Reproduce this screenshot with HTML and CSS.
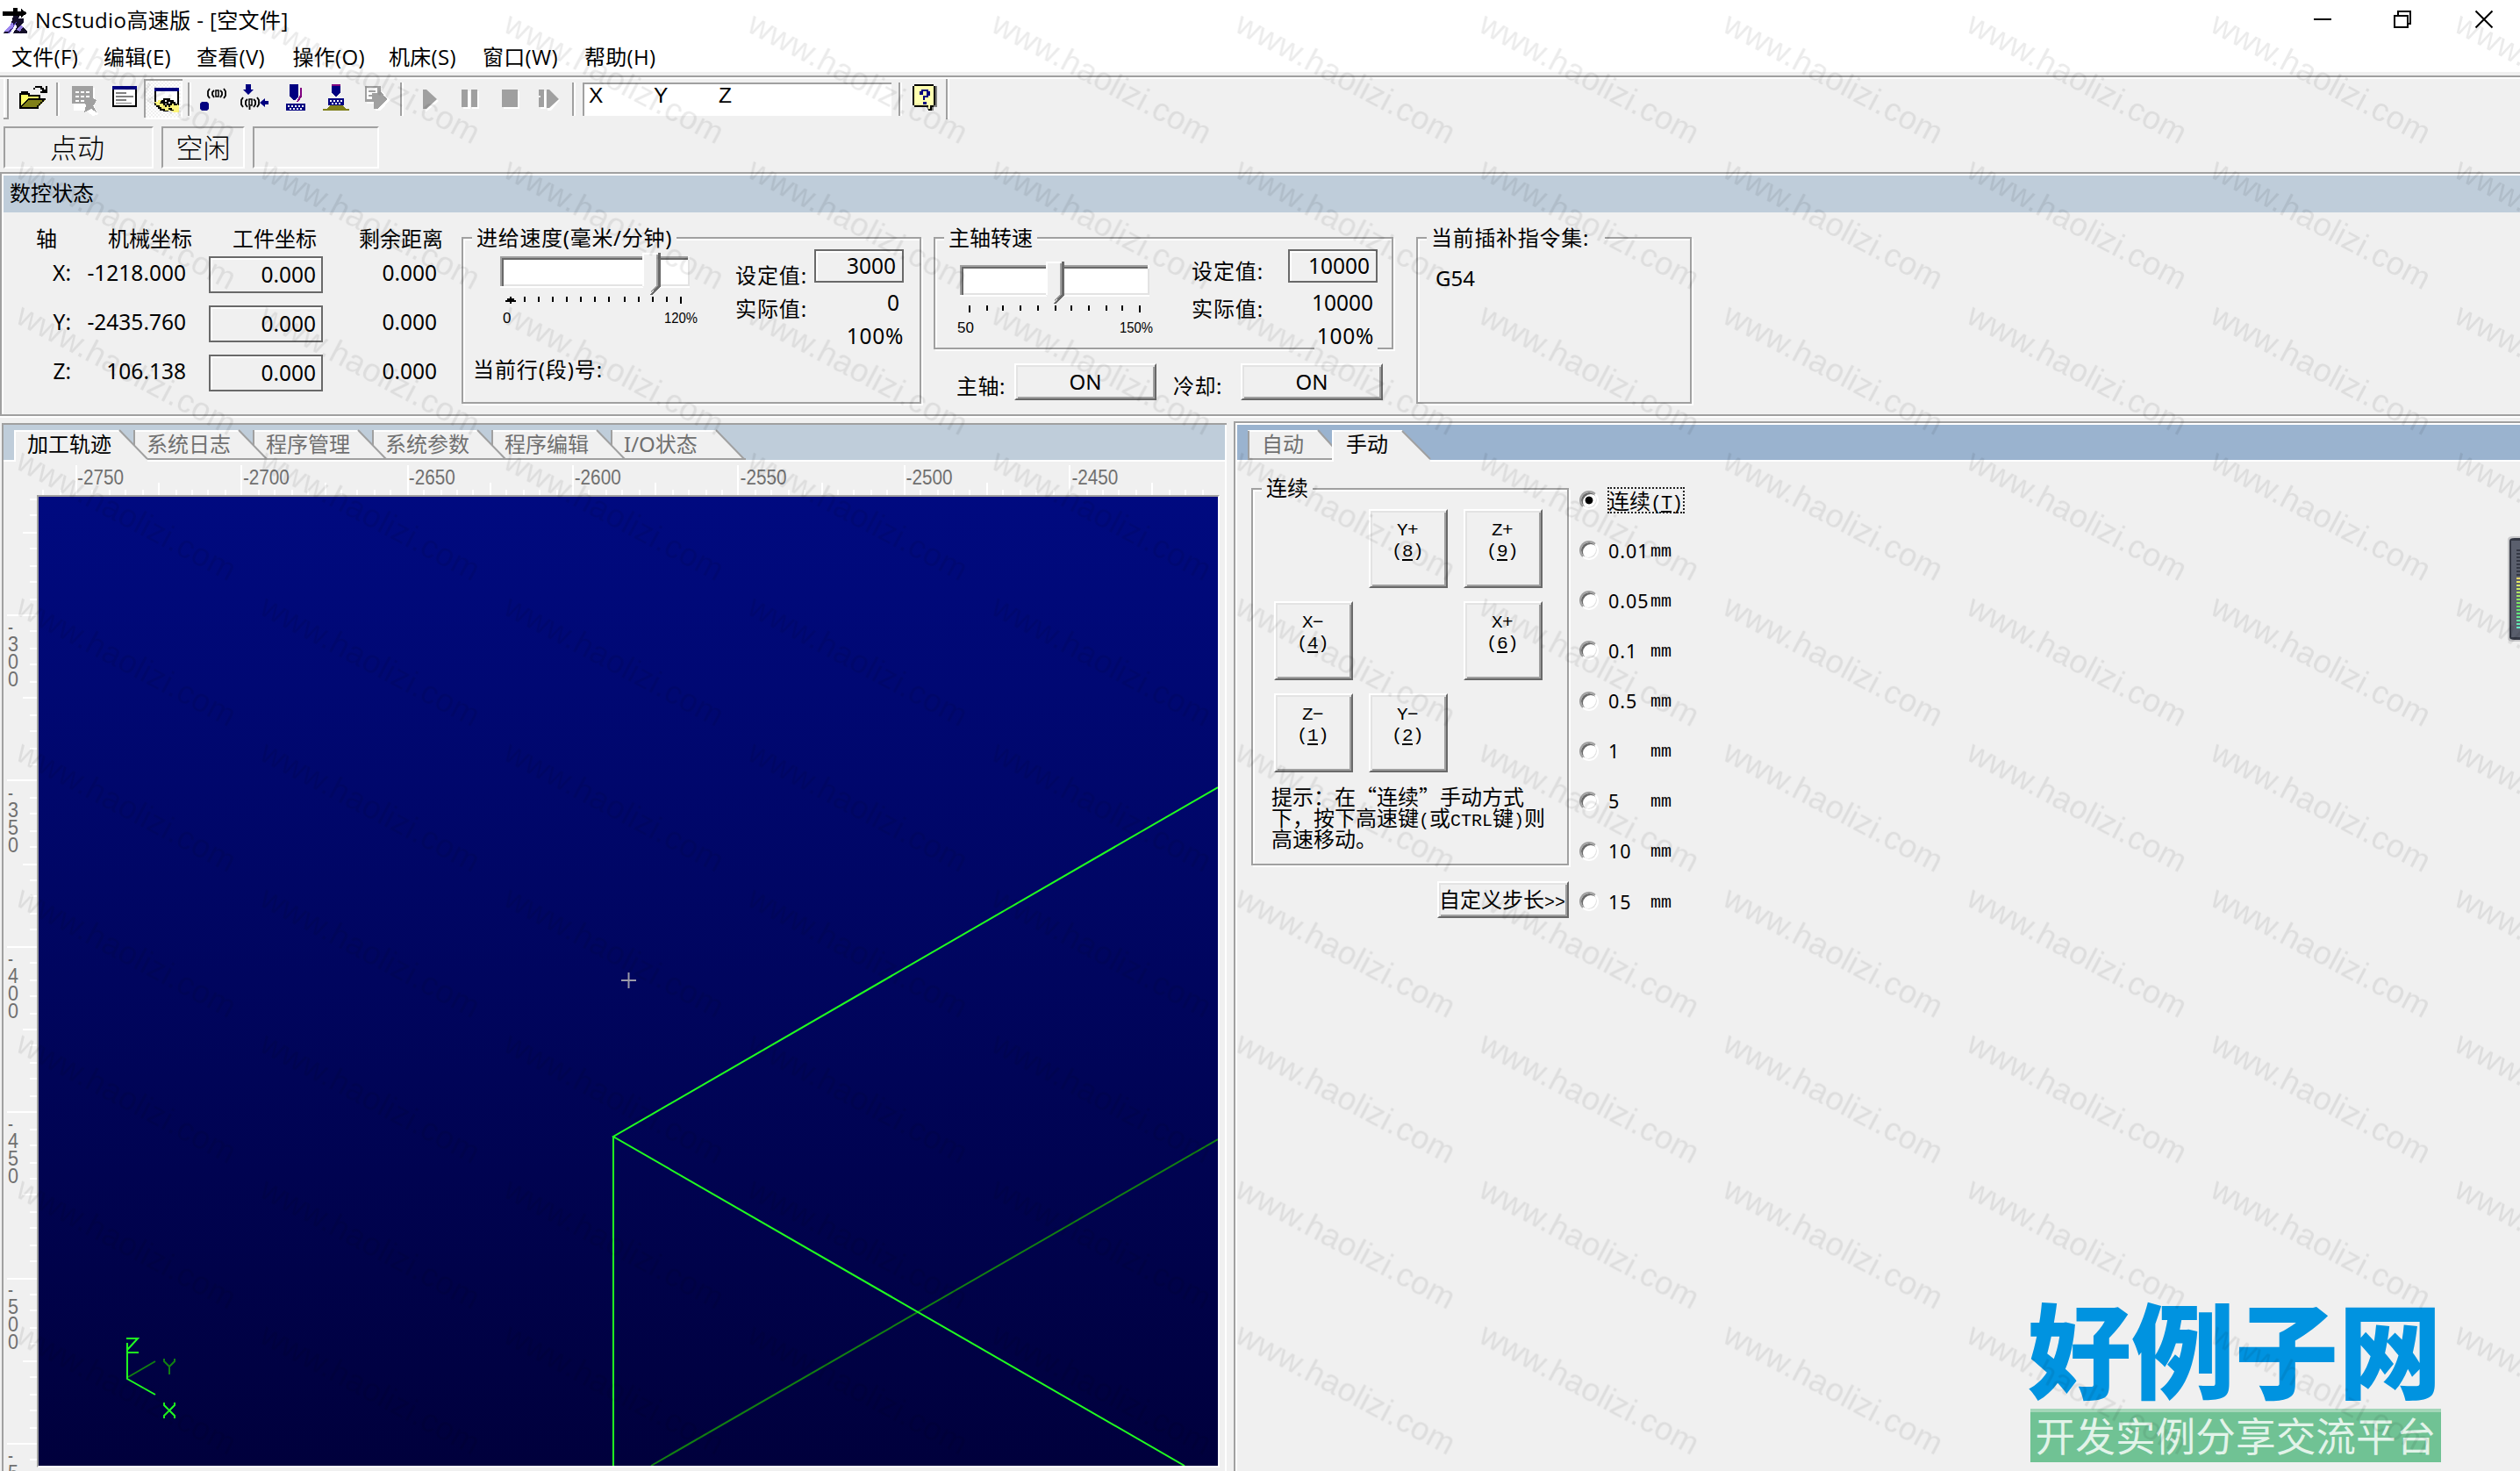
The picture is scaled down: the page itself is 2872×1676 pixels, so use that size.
FILE: index.html
```html
<!DOCTYPE html>
<html lang="zh-CN">
<head>
<meta charset="utf-8">
<title>NcStudio高速版 - [空文件]</title>
<link rel="stylesheet" href="styles.css">
</head>
<body>
<header class="titlebar">
  <svg class="app-icon" width="32" height="32" viewBox="0 0 32 32" shape-rendering="crispEdges">
    <path d="M1 5h12V1h5v4h4V2l7 5-7 5v-2H1z" fill="#000"/>
    <path d="M13 10h7l-3 7-4 7-4 6H1l6-5 5-8z" fill="#5a48b8"/>
    <path d="M13 10h7l-1 4-5 6-3-2z" fill="#15102a"/>
    <path d="M1 30l5-5h5l-4 5z" fill="#1a1430"/>
    <path d="M3 28l10-11v5l-6 6z" fill="#9c86f0"/>
    <path d="M19 13h6v4l-3 4 7 6v3H13l4-7-1-4z" fill="#15102a"/>
    <path d="M17 26l5-6 2 3-3 5z" fill="#9c86f0"/>
  </svg>
  <h1 class="title">NcStudio高速版 - [空文件]</h1>
  <svg class="win-controls" width="220" height="40" viewBox="2630 0 220 40">
    <path d="M2637 22h20" stroke="#000" stroke-width="2"/>
    <path d="M2729 18h15v13h-15zM2733 17v-4h14v14h-3" fill="none" stroke="#000" stroke-width="2"/>
    <path d="M2821.500 12.500l19 19M2840.500 12.500l-19 19" stroke="#000" stroke-width="2"/>
  </svg>
</header>
<nav class="menubar">
  <span>文件(F)</span><span>编辑(E)</span><span>查看(V)</span><span>操作(O)</span><span>机床(S)</span><span>窗口(W)</span><span>帮助(H)</span>
</nav>
<div class="toolbar">
  <svg width="16" height="46" viewBox="0 90 16 46" shape-rendering="crispEdges"><path d="M4 90h2v44H4z" fill="#fff"/><path d="M8 90h2v46H4v-2h4z" fill="#a0a0a0"/></svg>
  <svg width="44" height="46" viewBox="16 90 44 46" shape-rendering="crispEdges">
    <path d="M22 106h10v4h14v6H32l-8 8h-2z" fill="#ff6"/>
    <path d="M22 124v-18h2v-2h8v2h2v2h12v6h-2v-4H32v-2h-8v12z" fill="#000"/>
    <path d="M24 122l8-9h20l-8 9z" fill="#808018"/>
    <path d="M22 122l10-10h20v2h-2v2h-2v2h-2v2h-2v4H22v-2h20v-2h2v-2h2v-2h2v-2H32l-8 8z" fill="#000"/>
    <path d="M38 100h2v-2h8v2h2v2h2v-4h2v8h-8v-2h2v-2h-2v-2h-6v2h-2z" fill="#000"/>
  </svg>
  <svg class="sep" width="12" height="46" viewBox="60 90 12 46"><path d="M64 94h2v38h-2z" fill="#a0a0a0"/><path d="M66 94h2v38h-2z" fill="#fff"/></svg>
  <svg width="48" height="46" viewBox="72 90 48 46" shape-rendering="crispEdges">
    <path d="M84 100h24v26H84zM98 116l14 14-6 2-6-4z" fill="#fff"/>
    <path d="M82 98h24v14l4 2-2 4-2 2 4 8-6-4-8 4 2-8-2-2H82zM86 104v2h4v-2zM92 104v2h4v-2zM98 104v2h4v-2zM86 109v2h4v-2zM92 109v2h4v-2zM98 109v2h4v-2zM86 114v2h4v-2zM92 114v2h4v-2z" fill="#a0a0a0" fill-rule="evenodd"/>
  </svg>
  <svg width="42" height="46" viewBox="120 90 42 46" shape-rendering="crispEdges">
    <path d="M128 98h28v24h-28z" fill="#000"/><path d="M130 102h24v18h-24z" fill="#fff"/><path d="M128 98h28v4h-28z" fill="#000080"/>
    <path d="M132 105h12v2h-12zM132 109h20v2h-20zM132 113h12v2h-12zM132 117h18v1h-18z" fill="#808080"/>
  </svg>
  <svg width="48" height="46" viewBox="162 90 48 46" shape-rendering="crispEdges">
    <defs><pattern id="dither" width="4" height="4" patternUnits="userSpaceOnUse"><path d="M0 0h4v4H0z" fill="#f0f0f0"/><path d="M0 0h2v2H0zM2 2h2v2H2z" fill="#fff"/></pattern></defs>
    <path d="M164 90h44v44h-44z" fill="url(#dither)"/><path d="M164 90h44v2h-42v42h-2z" fill="#a0a0a0"/><path d="M206 92h2v44h-42v-2h40z" fill="#fff"/>
    <path d="M176 100h28v20h-28z" fill="#000"/><path d="M178 104h24v14h-24z" fill="#fff"/><path d="M176 100h28v4h-28z" fill="#000080"/>
    <path d="M176 116h4v-2h4l4 2 6-2 4 4 6 2v8h-6l-4-2h-6l-8-4z" fill="#fff67a"/>
    <path d="M184 114h2v-2h8v2h4v2h2v2h2v2h-4v-2h-2v2h-2v2h-2v-2h-2v2h-2v-2h-2v-2h-4z" fill="#000"/>
    <path d="M188 114h2v2h-2zM192 116h2v2h-2zM188 118h2v1h-2z" fill="#fff"/>
    <path d="M178 120h4v2h2v2h4v2h4v1h-6v-1h-4v-2h-2v-2h-2zM192 123h4v2h2v1h-4v-1h-2z" fill="#000"/>
  </svg>
  <svg width="12" height="46" viewBox="210 90 12 46"><path d="M214 94h2v38h-2z" fill="#a0a0a0"/><path d="M216 94h2v38h-2z" fill="#fff"/></svg>
  <svg width="44" height="46" viewBox="222 90 44 46">
    <path d="M230 116h6l2 2v6l-2 2h-6l-2-2v-6z" fill="#000080"/>
    <path d="M239 101l-2 3v5l2 3M244 103l-2 2v3l2 3M251 103l2 2v3l-2 3M255 101l2 3v5l-2 3" fill="none" stroke="#000" stroke-width="1.800"/><path d="M246 103h3v7h-3z" fill="none" stroke="#000" stroke-width="1.500"/>
  </svg>
  <svg width="48" height="46" viewBox="266 90 48 46">
    <path d="M280 96h6v6h3l-6 6-6-6h3zM296 117l6-5v3h4v4h-4v3z" fill="#000080"/>
    <path d="M277 111l-2 3v5l2 3M282 113l-2 2v4l2 3M289 113l2 2v4l-2 3M293 111l2 3v5l-2 3M284.500 121v4" fill="none" stroke="#000" stroke-width="1.800"/><path d="M284 113h3v7h-3z" fill="none" stroke="#000" stroke-width="1.500"/>
  </svg>
  <svg width="46" height="46" viewBox="314 90 46 46" shape-rendering="crispEdges">
    <path d="M330 96h10v14l-3 4h-3l-4-4z" fill="#000080"/><path d="M342 100h2v10l-4 6h-2l4-8z" fill="#800080"/>
    <path d="M326 118h22v8h-22z" fill="#000080"/><path d="M328 120h2v2h-2zM332 120h2v2h-2zM336 120h2v2h-2zM340 120h2v2h-2zM344 120h2v2h-2zM330 123h2v2h-2zM334 123h2v2h-2zM338 123h2v2h-2zM342 123h2v2h-2z" fill="#fff"/>
  </svg>
  <svg width="50" height="46" viewBox="360 90 50 46" shape-rendering="crispEdges">
    <path d="M378 96h10v10l-5 4-5-4z" fill="#000080"/><path d="M378 96h10v2h-10z" fill="#800080"/><path d="M374 112h18v8h-18z" fill="#000080"/>
    <path d="M376 114h2v2h-2zM380 114h2v2h-2zM384 114h2v2h-2zM388 114h2v2h-2zM378 117h2v2h-2zM382 117h2v2h-2zM386 117h2v2h-2z" fill="#fff"/>
    <path d="M376 120h14l4 4h4v2h-30v-2h4z" fill="#808018"/>
  </svg>
  <svg width="40" height="46" viewBox="410 90 40 46" shape-rendering="crispEdges">
    <path d="M418 100h18v4l8 10-10 12h-6v-8h-10z" fill="#fff"/>
    <path d="M416 98h18v6l7 9-10 11h-5v-8h-10zM418 100v13h6v-7h6v-6zM420 103h8v2h-8zM420 108h4v2h-4z" fill="#a0a0a0" fill-rule="evenodd"/>
  </svg>
  <svg width="14" height="46" viewBox="450 90 14 46"><path d="M456 94h2v38h-2z" fill="#a0a0a0"/><path d="M458 94h2v38h-2z" fill="#fff"/></svg>
  <svg width="48" height="46" viewBox="464 90 48 46"><path d="M484 104l16 11-14 12h-2z" fill="#fff"/><path d="M482 102h4l12 11-12 11h-4z" fill="#a0a0a0"/></svg>
  <svg width="48" height="46" viewBox="512 90 48 46"><path d="M528 104h8v20h-8zM538 104h8v20h-8z" fill="#fff"/><path d="M526 102h7v20h-7zM537 102h7v20h-7z" fill="#a0a0a0"/></svg>
  <svg width="42" height="46" viewBox="560 90 42 46"><path d="M574 104h18v20h-18z" fill="#fff"/><path d="M572 102h18v20h-18z" fill="#a0a0a0"/></svg>
  <svg width="44" height="46" viewBox="602 90 44 46"><path d="M616 104h6v20h-6zM626 104l12 10-10 12h-4z" fill="#fff"/><path d="M614 102h6v20h-6v-11h2v-2h-2zM623 102h3l11 11-11 10h-3z" fill="#a0a0a0"/></svg>
  <svg width="18" height="46" viewBox="646 90 18 46"><path d="M652 94h2v38h-2z" fill="#a0a0a0"/><path d="M654 94h2v38h-2z" fill="#fff"/></svg>
  <div class="axis-box"><span>X</span><span>Y</span><span>Z</span></div>
  <svg width="70" height="46" viewBox="1016 90 70 46" shape-rendering="crispEdges">
    <path d="M1024 94h2v38h-2zM1078 90h2v46h-2z" fill="#a0a0a0"/><path d="M1026 94h2v38h-2zM1080 90h2v46h-2z" fill="#fff"/>
    <path d="M1044 98h24v24h-4v4h-6z" fill="#808080"/>
    <path d="M1042 96h22v2h2v22h-2v2h-2v4h-4v-4h-16v-2h-2V98h2z" fill="#000"/><path d="M1042 98h22v22h-4v4h-2v-4h-16z" fill="#ffffb0"/>
    <path d="M1048 104h2v-2h8v2h2v5h-2v2h-4v3h-2v-5h4v-5h-4v4h-4zM1052 116h4v3h-4z" fill="#000080"/>
  </svg>
</div>
<div class="modebar"><div class="pane p1">点动</div><div class="pane p2">空闲</div><div class="pane p3"></div></div>

<section class="status">
  <h2 class="bar">数控状态</h2>
  <div class="status-body">
    <div class="coords">
      <span class="h h1c">轴</span><span class="h">机械坐标</span><span class="h h3c">工件坐标</span><span class="h">剩余距离</span>
      <span class="a">X:</span><span class="v">-1218.000</span><span class="b"><i>0.000</i></span><span class="v">0.000</span>
      <span class="a">Y:</span><span class="v">-2435.760</span><span class="b"><i>0.000</i></span><span class="v">0.000</span>
      <span class="a">Z:</span><span class="v">106.138</span><span class="b"><i>0.000</i></span><span class="v">0.000</span>
    </div>
    <div class="group feed">
      <div class="legend">进给速度(毫米/分钟)</div>
      <div class="group-row">
        <svg class="slider" width="260" height="92" shape-rendering="crispEdges">
          <path d="M6 6h216v36H6z" fill="#fff"/><path d="M6 6h214v2H8v32H6z" fill="#a0a0a0"/><path d="M8 8h212v2H10v30H8z" fill="#696969"/><path d="M10 38h210V10h2v30H10z" fill="#e3e3e3"/>
          <path d="M168 2h20v38l-10 11-10-11z" fill="#f0f0f0"/><path d="M168 2h18v2h-16v36h-2z" fill="#fff"/><path d="M184 4h2v35l-8 9v-2l6-7z" fill="#a0a0a0"/><path d="M186 2h3v38l-9 10h-3l9-11z" fill="#696969"/>
          <path class="tick" d="M18 52v8M34 52v6M50 52v6M66 52v6M82 52v6M98 52v6M114 52v6M130 52v6M148 52v6M164 52v6M180 52v6M196 52v6M212 52v8"/>
          <path d="M12 58h12v-2h-2v-2h-8v2h-2z"/>
          <text x="9" y="82">0</text><text x="193" y="82" textLength="38" lengthAdjust="spacingAndGlyphs">120%</text>
        </svg>
        <div class="labels"><span>设定值:</span><span>实际值:</span></div>
        <div class="values"><span class="box">3000</span><span class="val">0</span><span class="pct">100%</span></div>
      </div>
      <div class="line-no">当前行(段)号:</div>
    </div>
    <div class="spindle-col">
      <div class="group spindle">
        <div class="legend">主轴转速</div>
        <div class="group-row">
          <svg class="slider" width="260" height="92" shape-rendering="crispEdges">
            <path d="M6 6h216v36H6z" fill="#fff"/><path d="M6 6h214v2H8v32H6z" fill="#a0a0a0"/><path d="M8 8h212v2H10v30H8z" fill="#696969"/><path d="M10 38h210V10h2v30H10z" fill="#e3e3e3"/>
            <path d="M104 2h20v38l-10 11-10-11z" fill="#f0f0f0"/><path d="M104 2h18v2h-16v36h-2z" fill="#fff"/><path d="M120 4h2v35l-8 9v-2l6-7z" fill="#a0a0a0"/><path d="M122 2h3v38l-9 10h-3l9-11z" fill="#696969"/>
            <path class="tick" d="M17 52v8M37 52v6M55 52v6M75 52v6M95 52v6M115 52v6M133 52v6M153 52v6M173 52v6M191 52v6M211 52v8"/>
            <text x="3" y="83">50</text><text x="188" y="83" textLength="38" lengthAdjust="spacingAndGlyphs">150%</text>
          </svg>
          <div class="labels"><span>设定值:</span><span>实际值:</span></div>
          <div class="values"><span class="box">10000</span><span class="val">10000</span><span class="pct">100%</span></div>
        </div>
      </div>
      <div class="controls"><span>主轴:</span><button class="btn">ON</button><span class="cool">冷却:</span><button class="btn">ON</button></div>
    </div>
    <div class="group interp">
      <div class="legend">当前插补指令集:</div>
      <div class="code">G54</div>
    </div>
  </div>
</section>

<main class="work">
  <section class="left-pane">
    <div class="tabs">
      <svg class="tab-art" width="1392" height="42" viewBox="4 484 1392 42">
        <path d="M4 484h1392v40H4z" fill="#bfcdda"/><path d="M4 524h1392v2H4z" fill="#fff"/>
        <g id="tabset"></g>
      </svg>
      <span class="tab on">加工轨迹</span><span class="tab">系统日志</span><span class="tab">程序管理</span><span class="tab">系统参数</span><span class="tab">程序编辑</span><span class="tab io">I/O状态</span>
    </div>
    <svg class="ruler-h" id="rulerH" width="1392" height="38" viewBox="4 526 1392 38"></svg>
    <div class="view-row">
      <svg class="ruler-v" id="rulerV" width="38" height="1112" viewBox="4 564 38 1112"></svg>
      <div class="viewport">
        <svg width="1344" height="1104" viewBox="44 566 1344 1104">
          <defs><linearGradient id="deep" x1="0" y1="0" x2="0" y2="1"><stop offset="0" stop-color="#000a80"/><stop offset="1" stop-color="#00003c"/></linearGradient></defs>
          <path d="M44 566h1344v1104H44z" fill="url(#deep)"/>
          <g fill="none" stroke-width="2">
            <path d="M1388 1298L742 1670" stroke="#128012"/>
            <path d="M1388 897L699 1295L1350 1670M699 1295V1670" stroke="#20ff20"/>
            <path d="M708 1117h17M716.500 1108v18" stroke="#9a9aa8"/>
            <path d="M146 1569l31-18" stroke="#128012"/>
            <path d="M145 1530v41l32 18" stroke="#20ff20"/>
            <path d="M144 1525h13l-12 13M145 1541h13M187 1598v3l12 12v3M199 1598v3l-12 12v3" stroke="#20ff20"/>
            <path d="M187 1548v3l6 6 6-6v-3M193 1557v9" stroke="#128012"/>
          </g>
        </svg>
      </div>
    </div>
  </section>
  <section class="right-pane">
    <div class="tabs rt">
      <svg class="tab-art" width="1462" height="42" viewBox="1410 484 1462 42">
        <path d="M1410 484h1462v40H1410z" fill="#9ab3cf"/><path d="M1410 524h1462v2H1410z" fill="#fff"/>
        <path d="M1422 490h80l18 20v14h-98z" fill="#f0f0f0"/><path d="M1423 524v-33" stroke="#a0a0a0" stroke-width="2"/><path d="M1424 491h78" stroke="#fff" stroke-width="2"/><path d="M1502 490l18 20M1422 523h96" stroke="#a0a0a0" stroke-width="2"/>
        <path d="M1518 526v-36h80l32 34v2z" fill="#f0f0f0"/><path d="M1519 526v-35h79" fill="none" stroke="#fff" stroke-width="2"/><path d="M1598 491l32 32" stroke="#a0a0a0" stroke-width="2"/>
      </svg>
      <span class="tab auto">自动</span><span class="tab on">手动</span>
    </div>
    <div class="manual">
      <div class="jog-col">
        <div class="group jog">
          <div class="legend">连续</div>
          <div class="keys">
            <i></i><button class="btn key">Y+<br>(<u>8</u>)</button><button class="btn key">Z+<br>(<u>9</u>)</button>
            <button class="btn key">X−<br>(<u>4</u>)</button><i></i><button class="btn key">X+<br>(<u>6</u>)</button>
            <button class="btn key">Z−<br>(<u>1</u>)</button><button class="btn key">Y−<br>(<u>2</u>)</button><i></i>
          </div>
          <p class="hint">提示：在<span class="q">“</span>连续<span class="q r">”</span>手动方式<br>下，按下高速键<span class="m">(</span>或<span class="m">CTRL</span>键<span class="m">)</span>则<br>高速移动。</p>
        </div>
        <button class="btn custom">自定义步长<span class="m">&gt;&gt;</span></button>
      </div>
      <div class="steps">
        <label class="step"><b class="radio sel"></b><span class="focus">连续<span class="m">(<u>T</u>)</span></span></label>
        <label class="step"><b class="radio"></b><span class="n">0.01</span><span>mm</span></label>
        <label class="step"><b class="radio"></b><span class="n">0.05</span><span>mm</span></label>
        <label class="step"><b class="radio"></b><span class="n">0.1</span><span>mm</span></label>
        <label class="step"><b class="radio"></b><span class="n">0.5</span><span>mm</span></label>
        <label class="step"><b class="radio"></b><span class="n">1</span><span>mm</span></label>
        <label class="step"><b class="radio"></b><span class="n">5</span><span>mm</span></label>
        <label class="step"><b class="radio"></b><span class="n">10</span><span>mm</span></label>
        <label class="step"><b class="radio"></b><span class="n">15</span><span>mm</span></label>
      </div>
    </div>
  </section>
</main>

<svg class="meter" width="14" height="120" viewBox="0 0 14 120">
  <path d="M0 4q0-4 6-4h8v120H6q-6 0-6-4z" fill="#c8c8ca"/><path d="M2 5q0-3 6-3h6v116H8q-6 0-6-3z" fill="#343844"/><path d="M4 5h10v110H4z" fill="#5a5f6d"/>
  <g id="meterBars"></g>
</svg>
<div class="logo"><div class="logo-name">好例子网</div><div class="logo-sub">开发实例分享交流平台</div></div>
<svg class="watermark" width="2872" height="1676">
  <defs><pattern id="wm" width="277.900" height="165.950" patternUnits="userSpaceOnUse" x="8" y="5">
    <text transform="translate(8 30) rotate(28)" textLength="277">www.haolizi.com</text>
  </pattern></defs>
  <rect width="2872" height="1676" fill="url(#wm)"/>
</svg>
<script src="main.js"></script>
</body>
</html>
```
FILE: styles.css
```css
* { box-sizing: border-box; }
body {
  margin: 0; width: 2872px; height: 1676px; overflow: hidden; position: relative;
  background: #f0f0f0; color: #000;
  font: 24px/28px "Noto Sans", "Noto Sans CJK SC", sans-serif;
}
svg { display: block; flex: none; }
h1, h2, p { margin: 0; font-weight: 400; font-size: 24px; }
i, b { font-style: normal; }
button { font: inherit; color: inherit; padding: 0; }

.titlebar { display: flex; height: 46px; background: #fff; }
.app-icon { margin: 8px 0 0 2px; }
.title { margin: 9px 0 0 6px; font-family: "Open Sans", "Noto Sans CJK SC", sans-serif; letter-spacing: .4px; }
.win-controls { margin-left: auto; margin-right: 22px; }

.menubar { display: flex; height: 40px; background: #fff; padding: 5px 0 0 13px; border-bottom: 4px solid #f0f0f0; font-family: "Open Sans", "Noto Sans CJK SC", sans-serif; letter-spacing: .3px; }
.menubar span { flex: none; margin-right: 29px; width: 76px; white-space: nowrap; }
.menubar span:nth-child(2) { width: 77px; }
.menubar span:nth-child(3), .menubar span:nth-child(4) { width: 80.500px; }
.menubar span:nth-child(5) { width: 78px; }
.menubar span:nth-child(6) { width: 87px; }

.toolbar { display: flex; height: 50px; border-top: 2px solid #a0a0a0; box-shadow: inset 0 2px #fff; padding-top: 2px; }
.axis-box { width: 352px; height: 38px; margin-top: 4px; background: #fff; border: solid #a0a0a0; border-width: 2px 0 0 2px; display: flex; padding-left: 5px; font: 24.500px/26px "Liberation Sans", sans-serif; }
.axis-box span { width: 74px; }

.modebar { display: flex; gap: 9px; height: 60px; padding: 8px 4px 0; }
.pane { height: 48px; border: 2px solid #a0a0a0; border-right-color: #fff; border-bottom-color: #fff; text-align: center; font: 300 31px/41px "Noto Sans CJK SC", sans-serif; }
.p1 { width: 171px; padding-right: 3px; }
.p2 { width: 95px; }
.p3 { width: 144px; }

.status { height: 278px; border: solid #a0a0a0; border-width: 2px 0 2px 2px; box-shadow: inset 2px 2px #fff, 0 2px #fff; padding: 2px 0 0 2px; }
.bar { height: 42px; line-height: 40px; padding-left: 7px; background: #bfcdda; }
.status-body { display: flex; height: 230px; }
.coords { width: 522px; display: grid; grid-template-columns: 77px 138px 149px 137px; grid-template-rows: 43px 56px 56px 56px; justify-content: start; text-align: right; font-size: 24.500px; }
.coords > span { align-self: center; }
.coords .h { align-self: start; padding-top: 16px; font-size: 24px; }
.coords .h1c { padding-right: 16px; }
.coords .h3c { padding-right: 7px; }
.coords .a { margin-bottom: 4px; }
.coords .v { padding-right: 7px; margin-bottom: 4px; }
.b i { display: block; margin-left: auto; width: 130px; height: 42px; border: 2px solid #696969; box-shadow: inset 2px 2px #fff; line-height: 38px; padding-right: 6px; }

.group { border: 2px solid #a0a0a0; box-shadow: 2px 2px #fff, inset 2px 2px #fff; }
.legend { width: max-content; margin: -15px 0 -1px 9px; padding: 0 5px; background: #f0f0f0; position: relative; }
.group-row { display: flex; }
.feed { width: 524px; height: 190px; margin-top: 28px; }
.feed .legend { letter-spacing: .7px; margin-left: 10px; }
.feed .slider { margin: 2px 14px 0 36px; }
.slider { fill: #000; font: 17px "Liberation Sans", sans-serif; }
.slider .tick { stroke: #000; stroke-width: 2; }
.labels { display: flex; flex-direction: column; width: 90px; padding-top: 16px; gap: 10px; letter-spacing: .9px; }
.values { display: flex; flex-direction: column; width: 102px; text-align: right; font-size: 24.500px; }
.values .box { height: 38px; border: 2px solid #696969; box-shadow: inset 2px 2px #fff; line-height: 34px; padding-right: 7px; }
.values .val { margin-top: 9px; padding-right: 5px; }
.values .pct { margin: 10px 0 0 30px; padding-bottom: 4px; background: #f0f0f0; position: relative; letter-spacing: .7px; }
.line-no { margin: 6px 0 0 11px; letter-spacing: .9px; }
.spindle-col { margin: 28px 0 0 14px; width: 526px; }
.spindle { width: 524px; height: 128px; }
.spindle .legend { margin-left: 10px; }
.spindle .slider { margin: 12px 10px 0 22px; }
.spindle .labels { padding-top: 11px; gap: 15px; width: 110px; }
.spindle .values { width: 102px; }
.spindle .pct { width: 72px; padding-right: 4px; }
.controls { display: flex; margin-top: 16px; padding-left: 26px; letter-spacing: .5px; }
.controls span { width: 66px; padding-top: 12px; }
.controls .cool { margin-left: 19px; width: 77px; }
.btn { border: 2px solid; border-color: #fff #696969 #696969 #fff; border-radius: 0; background: #f0f0f0; box-shadow: inset 2px 2px #e3e3e3, inset -2px -2px #a0a0a0; }
.controls .btn { width: 162px; height: 42px; line-height: 36px; letter-spacing: 0; }
.interp { width: 314px; height: 190px; margin: 28px 0 0 24px; }
.interp .legend { margin-left: 10px; padding-right: 18px; letter-spacing: .7px; }
.code { margin: 19px 0 0 20px; }

.work { display: flex; height: 1202px; padding-top: 8px; }
.left-pane { width: 1396px; margin-left: 2px; border: solid #a0a0a0; border-width: 2px 0 0 2px; box-shadow: inset -2px 0 #fff; }
.tabs { height: 42px; position: relative; display: flex; padding-left: 27px; }
.tab-art { position: absolute; left: 0; top: 0; }
.tab { position: relative; flex: none; width: 136px; line-height: 43px; color: #707070; }
.tab.on { color: #000; }
.view-row { display: flex; }
.viewport { width: 1348px; height: 1108px; border: solid; border-color: #a0a0a0 #fff #fff #a0a0a0; border-width: 2px; }
.ruler-h, .ruler-v { fill: #707070; font: 24.500px "Liberation Sans", sans-serif; }
.ruler-h path, .ruler-v path { stroke: #fff; stroke-width: 2; }

.right-pane { width: 1466px; margin: -2px 0 0 8px; border: solid #a0a0a0; border-width: 2px 0 0 2px; box-shadow: inset 2px 2px #fff; padding: 2px 0 0 2px; }
.tabs.rt { padding-left: 28px; }
.tab.auto { width: 96px; }
.manual { display: flex; gap: 12px; padding: 30px 0 0 16px; font-family: "Noto Sans CJK SC", sans-serif; }
.jog { width: 362px; height: 430px; }
.jog .legend { margin: -17px 0 1px 10px; }
.keys { display: grid; grid-template-columns: repeat(3, 90px); grid-auto-rows: 90px; gap: 15px 18px; padding: 10px 0 0 24px; }
.key { font: 21px/24px "Liberation Mono", monospace; letter-spacing: -.6px; padding: 0 2px 16px 0; }
.key u { text-underline-offset: 3px; }
.hint { margin: 15px 0 0 21px; line-height: 24px; white-space: nowrap; }
.m { font-family: "Liberation Mono", monospace; font-size: 20px; line-height: 0; }
.q { display: inline-block; width: 24px; height: 24px; vertical-align: top; text-align: right; }
.q.r { text-align: left; }
.custom { display: block; width: 150px; height: 42px; margin: 18px 0 0 auto; padding: 0 3px 2px 0; line-height: 34px; white-space: nowrap; }
.steps { display: flex; flex-direction: column; justify-content: space-between; height: 485px; }
.step { display: flex; align-items: center; height: 28px; white-space: pre; font: 20px/28px "Liberation Mono", monospace; }
.step > span { padding-top: 3px; }
.step > .n { width: 48px; margin-left: 11px; padding-top: 1px; font: 21.500px/28px "Noto Sans", sans-serif; letter-spacing: 1px; }
.radio { width: 22px; height: 22px; border-radius: 50%; background: #fff; border: 2px solid; border-color: #a0a0a0 #fff #fff #a0a0a0; box-shadow: inset 2px 2px #696969, inset -1px -1px #e3e3e3; }
.radio.sel { background: radial-gradient(circle, #000 4px, #fff 4.800px); }
.step > .focus { outline: 2px dotted #222; margin: 0 0 0 12px; padding: 0; width: 84px; font: 24px/26px "Noto Sans CJK SC", sans-serif; text-indent: -1px; }
.focus .m { font-size: 22px; letter-spacing: -1.200px; }

.meter { position: absolute; left: 2858px; top: 611px; }
.logo { position: absolute; left: 2314px; top: 1468px; width: 468px; }
.logo-name { height: 137px; margin-left: -3px; font: 900 118px/132px "Noto Sans CJK SC", sans-serif; color: #0093e0; white-space: nowrap; }
.logo-sub { height: 61px; background: #70c294; border-top: 4px solid #a3d6b8; font: 45.700px/50px "Noto Sans CJK SC", sans-serif; color: #e2f3e9; text-align: center; white-space: nowrap; }
.watermark { position: absolute; left: 0; top: 0; pointer-events: none; }
.watermark text { font: 37px "Liberation Sans", sans-serif; fill: #000; fill-opacity: .08; }
```
FILE: main.js
```js
const NS = 'http://www.w3.org/2000/svg';
const add = (parent, tag, attrs, text) => {
  const el = document.createElementNS(NS, tag);
  for (const k in attrs) el.setAttribute(k, attrs[k]);
  if (text) el.textContent = text;
  parent.appendChild(el);
};
const snap = v => 2 * Math.round((v - 1) / 2) + 1;

// Horizontal ruler: major mark every ten steps, half mark every five
let d = '';
for (let k = -2; k < 69; k++) {
  const x = snap(87 + k * 18.87);
  if (x > 1386) break;
  const m = ((k % 10) + 10) % 10;
  d += `M${x} 564v-${m === 0 ? 34 : m === 5 ? 14 : 6}`;
}
const h = document.getElementById('rulerH');
add(h, 'path', { d });
for (let i = 0; i < 7; i++)
  add(h, 'text', { x: 88 + i * 188.9, y: 552, textLength: 53, lengthAdjust: 'spacingAndGlyphs' }, String(-2750 + i * 50));

// Vertical ruler, digits stacked one per line
d = '';
for (let k = -7; k < 52; k++) {
  const y = snap(701 + k * 18.88);
  if (y > 1668) break;
  const m = ((k % 10) + 10) % 10;
  d += `M42 ${y}h-${m === 0 ? 34 : m === 5 ? 16 : 8}`;
}
const v = document.getElementById('rulerV');
add(v, 'path', { d });
for (let i = 0; i < 6; i++)
  [...String(-300 - i * 50)].forEach((c, j) =>
    add(v, 'text', { x: 9, y: 722 + i * 188.8 + j * 20, textLength: c === '-' ? 6 : 12, lengthAdjust: 'spacingAndGlyphs' }, c));

// Tabs, drawn right to left so each one overlaps the next
const t = document.getElementById('tabset');
add(t, 'path', { d: 'M168 523h682', stroke: '#a0a0a0', 'stroke-width': 2 });
for (let i = 5; i >= 0; i--) {
  const x = 16 + i * 136;
  add(t, 'path', { d: `M${x} ${i ? 522 : 526}V490h120l32 32v${i ? 0 : 4}z`, fill: '#f0f0f0' });
  add(t, 'path', { d: `M${x + 1} ${i ? 512 : 526}V490`, stroke: i ? '#a0a0a0' : '#fff', 'stroke-width': 2 });
  add(t, 'path', { d: `M${x + 2} 491h118`, stroke: '#fff', 'stroke-width': 2 });
  add(t, 'path', { d: `M${x + 120} 490l32 33`, stroke: '#a0a0a0', 'stroke-width': 2 });
}

// Level meter: idle bars on top, lit bars fading from yellow to teal
const g = document.getElementById('meterBars');
for (let i = 0; i < 23; i++) {
  const k = i - 8;
  const fill = k < 0 ? '#343844' : `hsl(${52 + k * 8}, 75%, 65%)`;
  add(g, 'rect', { x: 10, y: 15 + i * 4, width: 4, height: 2, fill });
}
```
